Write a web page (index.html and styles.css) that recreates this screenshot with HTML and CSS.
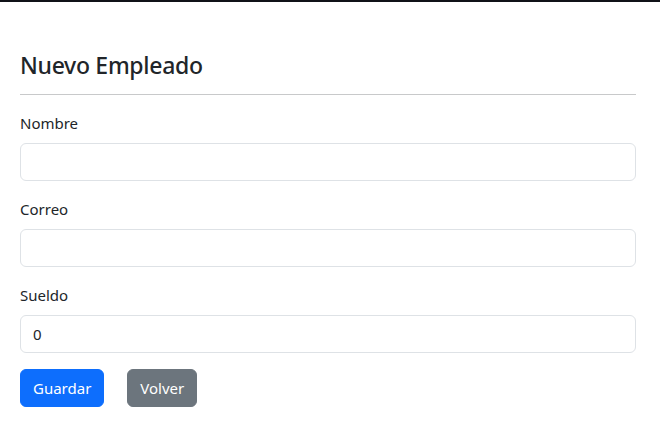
FILE: index.html
```html
<!DOCTYPE html>
<html lang="es">
<head>
<meta charset="utf-8">
<title>Nuevo Empleado</title>
<link rel="stylesheet" href="styles.css">
</head>
<body>
<div class="topbar"></div>
<main class="page">
  <h3 class="title">Nuevo Empleado</h3>
  <hr class="divider">
  <form class="form">
    <div class="field">
      <label class="label" for="nombre">Nombre</label>
      <input class="input" id="nombre" type="text">
    </div>
    <div class="field">
      <label class="label" for="correo">Correo</label>
      <input class="input" id="correo" type="text">
    </div>
    <div class="field">
      <label class="label" for="sueldo">Sueldo</label>
      <input class="input" id="sueldo" type="text" value="0">
    </div>
    <div class="actions">
      <button type="button" class="btn btn-primary">Guardar</button>
      <button type="button" class="btn btn-secondary">Volver</button>
    </div>
  </form>
</main>
</body>
</html>
```
FILE: styles.css
```css
* { box-sizing: border-box; }
html, body { margin: 0; padding: 0; background: #fff; }
body {
  font-family: "Noto Sans", "Open Sans", sans-serif;
  font-size: 16px;
  line-height: 24px;
  color: #212529;
}
.topbar { height: 2px; background: #101218; }
.page { padding: 49px 24px 0 20px; }
.title {
  margin: 0;
  font-size: 23px;
  font-weight: 500;
  line-height: 29px;
  letter-spacing: -0.3px;
  color: #212529;
}
.divider {
  margin: 14px 0 16px;
  border: 0;
  border-top: 1px solid #c8c9ca;
  height: 0;
}
.form { display: flex; flex-direction: column; gap: 16px; }
.field { display: flex; flex-direction: column; gap: 8px; }
.label { display: block; font-size: 15px; }
.input {
  display: block;
  width: 100%;
  height: 38px;
  padding: 6px 12px;
  font-family: inherit;
  font-size: 15px;
  color: #212529;
  background: #fff;
  border: 1px solid #dee2e6;
  border-radius: 6px;
  outline: none;
}
.actions { display: flex; gap: 23px; }
.btn {
  height: 38px;
  padding: 6px 12px;
  font-family: inherit;
  font-size: 15px;
  line-height: 24px;
  color: #fff;
  border: 1px solid transparent;
  border-radius: 6px;
}
.btn-primary { background: #0d6efd; border-color: #0d6efd; }
.btn-secondary { background: #6c757d; border-color: #6c757d; }
```
